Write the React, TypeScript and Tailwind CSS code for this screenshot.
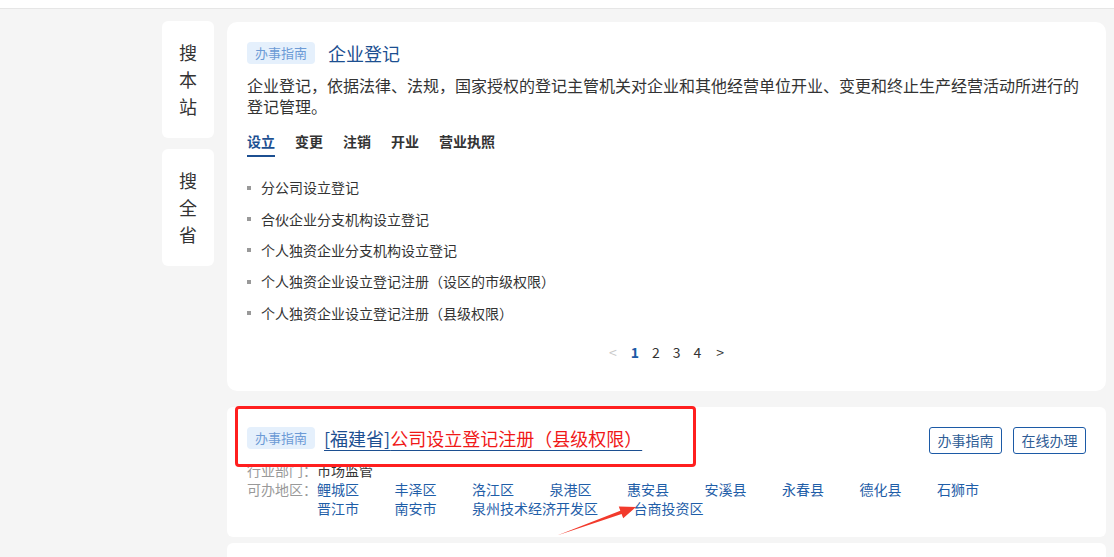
import type { ReactNode } from 'react'

const tabs = ['设立', '变更', '注销', '开业', '营业执照']

const items = [
  '分公司设立登记',
  '合伙企业分支机构设立登记',
  '个人独资企业分支机构设立登记',
  '个人独资企业设立登记注册（设区的市级权限）',
  '个人独资企业设立登记注册（县级权限）',
]

const areas = [
  '鲤城区',
  '丰泽区',
  '洛江区',
  '泉港区',
  '惠安县',
  '安溪县',
  '永春县',
  '德化县',
  '石狮市',
  '晋江市',
  '南安市',
  '泉州技术经济开发区',
  '台商投资区',
]

function Tag({ children }: { children: ReactNode }) {
  return (
    <span className="inline-flex h-[22px] shrink-0 items-center rounded-[4px] bg-[#e5f0fc] px-[8px] text-[13px] text-[#6d9bd6]">
      {children}
    </span>
  )
}

function SideButton({ label }: { label: string }) {
  return (
    <div className="flex h-[117px] w-[52px] items-center justify-center rounded-[6px] bg-white">
      <div className="flex flex-col items-center text-[18px] leading-[27px] text-[#333]">
        {label.split('').map((ch) => (
          <span key={ch}>{ch}</span>
        ))}
      </div>
    </div>
  )
}

export default function App() {
  return (
    <div className="min-h-[557px] bg-[#f5f5f5] font-['Noto_Sans_CJK_SC','Microsoft_YaHei',sans-serif] text-[#333]">
      <div className="h-[9px] border-b border-[#e6e6e6] bg-white" />

      <div className="flex gap-[13px] pl-[162px] pr-[8px] pt-[12px]">
        <div className="flex flex-col gap-[11px]">
          <SideButton label="搜本站" />
          <SideButton label="搜全省" />
        </div>

        <div className="mt-[1px] flex w-[879px] flex-col">
          {/* guide card */}
          <section className="h-[369px] rounded-[10px] bg-white px-[20px] pt-[20px]">
            <div className="flex items-center gap-[13px]">
              <Tag>办事指南</Tag>
              <h2 className="text-[18px] leading-[22px] text-[#1c4f91]">企业登记</h2>
            </div>
            <p className="mt-[11px] text-[16px] leading-[21px] text-[#333]">
              企业登记，依据法律、法规，国家授权的登记主管机关对企业和其他经营单位开业、变更和终止生产经营活动所进行的登记管理。
            </p>

            <div className="mt-[15px] flex gap-[20px]">
              {tabs.map((t, i) => (
                <div key={t} className="flex flex-col">
                  <span
                    className={`text-[14px] font-bold leading-[18px] ${
                      i === 0 ? 'text-[#1c4f91]' : 'text-[#333]'
                    }`}
                  >
                    {t}
                  </span>
                  <span
                    className={`mt-[5px] h-[2px] ${i === 0 ? 'bg-[#1c4f91]' : 'bg-transparent'}`}
                  />
                </div>
              ))}
            </div>

            <ul className="mt-[15px]">
              {items.map((item) => (
                <li key={item} className="flex h-[31.4px] items-center text-[14px] text-[#333]">
                  <span className="mr-[10px] h-[4px] w-[4px] bg-[#999]" />
                  {item}
                </li>
              ))}
            </ul>

            <div className="mt-[14px] flex items-center justify-center gap-[13px] text-[14px] leading-[18px]">
              <span className="mr-[1px] text-[#c8c8c8]">&lt;</span>
              <span className="font-bold text-[#1c5aa6]">1</span>
              <span>2</span>
              <span>3</span>
              <span>4</span>
              <span className="ml-[2px] text-[#333]">&gt;</span>
            </div>
          </section>

          {/* result card */}
          <section className="relative mt-[16px] h-[130px] rounded-[6px] bg-white px-[20px] pt-[20px]">
            <div className="flex items-start justify-between">
              <div className="flex items-center gap-[9px]">
                <Tag>办事指南</Tag>
                <a className="text-[18px] leading-[22px] text-[#1c4f91] underline decoration-[#1c4f91] decoration-1 underline-offset-[4px]">
                  [福建省]<span className="text-[#f01818]">公司设立登记注册（县级权限）</span>
                </a>
              </div>
              <div className="flex gap-[11px]">
                <button className="h-[27px] w-[73px] rounded-[3px] border border-[#1c5aa6] text-[14px] text-[#2f5d96]">
                  办事指南
                </button>
                <button className="h-[27px] w-[73px] rounded-[3px] border border-[#1c5aa6] text-[14px] text-[#2f5d96]">
                  在线办理
                </button>
              </div>
            </div>

            <div className="mt-[7px] flex text-[14px] leading-[19px]">
              <span className="text-[#999]">行业部门：</span>
              <span className="text-[#333]">市场监管</span>
            </div>
            <div className="flex text-[14px] leading-[19px]">
              <span className="shrink-0 text-[#999]">可办地区：</span>
              <div className="flex w-[720px] flex-wrap gap-x-[35.5px]">
                {areas.map((a) => (
                  <span key={a} className="text-[#1f5ea8]">
                    {a}
                  </span>
                ))}
              </div>
            </div>

            {/* annotation frame and arrow */}
            <div className="pointer-events-none absolute left-[8px] top-[-1px] h-[61px] w-[461px] rounded-[4px] border-[3px] border-[#ff1f1f]" />
            <svg
              className="pointer-events-none absolute left-0 top-0 overflow-visible"
              width="879"
              height="130"
              viewBox="0 0 879 130"
            >
              <polygon
                points="330,128.5 394.6,106.9 396.2,111.3 409,100 391.8,99.4 393.3,103.8"
                fill="#f23a2c"
              />
            </svg>
          </section>

          <section className="mt-[6px] h-[20px] rounded-t-[6px] bg-white" />
        </div>
      </div>
    </div>
  )
}
